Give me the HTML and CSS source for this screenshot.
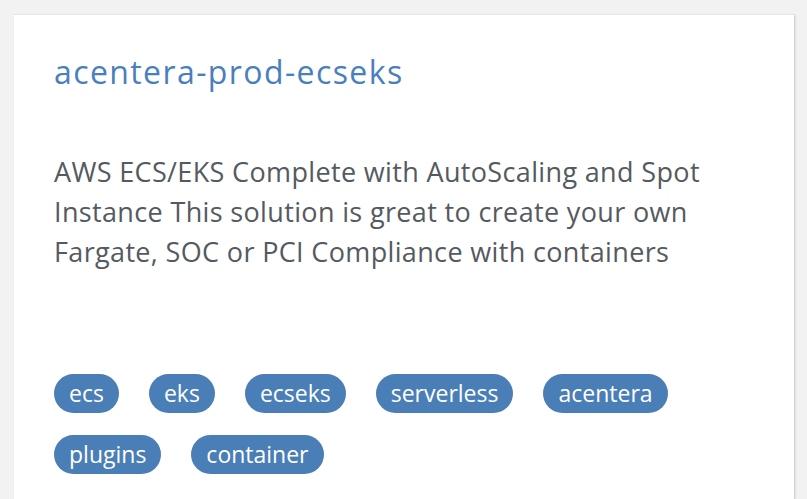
FILE: index.html
```html
<!DOCTYPE html>
<html lang="en">
<head>
<meta charset="utf-8">
<title>acentera-prod-ecseks</title>
<link rel="stylesheet" href="styles.css">
</head>
<body>
<div class="card">
  <h2 class="card-title">acentera-prod-ecseks</h2>
  <p class="card-desc">AWS ECS/EKS Complete with AutoScaling and Spot Instance This solution is great to create your own Fargate, SOC or PCI Compliance with containers</p>
  <ul class="tags">
    <li class="tag">ecs</li>
    <li class="tag">eks</li>
    <li class="tag">ecseks</li>
    <li class="tag">serverless</li>
    <li class="tag">acentera</li>
    <li class="tag">plugins</li>
    <li class="tag">container</li>
  </ul>
</div>
</body>
</html>
```
FILE: styles.css
```css
html, body {
  margin: 0;
  padding: 0;
  background: #f2f2f2;
  font-family: "Open Sans", "Noto Sans", sans-serif;
}
html {
  overflow: hidden;
}
body {
  padding: 14px 13px 0 14px;
  height: 100vh;
  box-sizing: border-box;
  overflow: hidden;
}
.card {
  background: #fff;
  border-top: 1px solid #e4e4e4;
  box-shadow: 1px 1px 2px rgba(0,0,0,0.18);
  padding: 37px 40px 0 40px;
  height: 100%;
  box-sizing: border-box;
  overflow: hidden;
}
.card-title {
  margin: 0;
  font-weight: 400;
  font-size: 32px;
  letter-spacing: 1.4px;
  line-height: 40px;
  color: #4a7fbd;
}
.card-desc {
  margin: 60px 0 0 0;
  font-size: 27px;
  letter-spacing: 0.35px;
  line-height: 40px;
  color: #555a60;
  height: 222px;
}
.tags {
  list-style: none;
  margin: 0;
  padding: 0;
  display: flex;
  flex-wrap: wrap;
  column-gap: 30px;
  row-gap: 22px;
}
.tag {
  background: #4a7eb6;
  color: #fff;
  font-size: 23px;
  letter-spacing: 0;
  line-height: 39px;
  height: 39px;
  padding: 0 15px;
  border-radius: 20px;
}
```
